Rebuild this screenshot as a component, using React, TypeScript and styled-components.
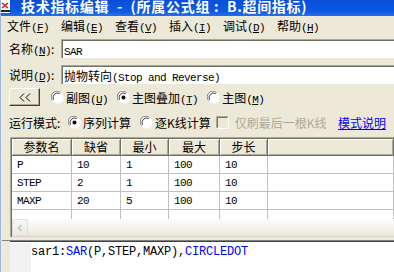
import React from 'react';
import styled, { createGlobalStyle } from 'styled-components';

const GlobalStyle = createGlobalStyle`
  html, body {
    margin: 0;
    padding: 0;
    background: #ece9d8;
  }
  body {
    font-family: "Noto Sans CJK SC", "DejaVu Sans", sans-serif;
    font-size: 12px;
    color: #000;
  }
`;

const Window = styled.div`
  width: 394px;
  height: 272px;
  overflow: hidden;
  background: #ece9d8;
  display: flex;
  flex-direction: column;
  border-left: 1px solid #9cb6e0;
  box-sizing: border-box;
`;

const TitleBar = styled.div`
  height: 16px;
  flex: none;
  background: linear-gradient(#0a4ed6, #0b5ae4 70%, #2a6ee6);
  display: flex;
  align-items: center;
  overflow: hidden;
`;

const TitleIcon = styled.svg`
  flex: none;
  margin-top: -4px;
`;

const TitleText = styled.div`
  color: #fff;
  font-weight: bold;
  font-size: 14px;
  line-height: 16px;
  margin-top: -5px;
  margin-left: 11px;
  white-space: pre;
  letter-spacing: 0.7px;
`;

const MenuBar = styled.div`
  height: 21px;
  flex: none;
  display: flex;
  align-items: center;
  padding-left: 6px;
`;

const MenuItem = styled.div`
  width: 54px;
  flex: none;
  white-space: nowrap;
  line-height: 20px;
`;

const Key = styled.span`
  font-family: "Liberation Mono", monospace;
  font-size: 11px;
  letter-spacing: -0.6px;
  text-decoration: underline;
`;

const Paren = styled.span`
  font-family: "Liberation Mono", monospace;
  font-size: 11px;
  letter-spacing: -0.6px;
`;

const Form = styled.div`
  padding-left: 8px;
  display: flex;
  flex-direction: column;
`;

const FieldRow = styled.div<{ $top: number }>`
  display: flex;
  align-items: center;
  height: 19px;
  margin-top: ${(p) => p.$top}px;
`;

const Label = styled.div<{ $w?: number }>`
  width: ${(p) => p.$w ?? 52}px;
  flex: none;
  white-space: nowrap;
`;

const Field = styled.div`
  flex: 1;
  height: 19px;
  box-sizing: border-box;
  background: #fff;
  border-top: 1px solid #aca899;
  border-left: 1px solid #aca899;
  box-shadow: inset 1px 1px #716f64;
  padding: 1px 0 0 2px;
  line-height: 17px;
  white-space: nowrap;
  overflow: hidden;
`;

const Mono = styled.span`
  font-family: "Liberation Mono", monospace;
  font-size: 11px;
  letter-spacing: -0.6px;
`;

const OptionRow = styled.div<{ $top: number }>`
  display: flex;
  align-items: center;
  height: 18px;
  margin-top: ${(p) => p.$top}px;
  white-space: nowrap;
`;

const Button = styled.div`
  width: 31px;
  height: 18px;
  box-sizing: border-box;
  flex: none;
  background: #ece9d8;
  border-top: 1px solid #fff;
  border-left: 1px solid #fff;
  border-right: 1px solid #404040;
  border-bottom: 1px solid #404040;
  box-shadow: inset -1px -1px #aca899;
  display: flex;
  align-items: center;
  justify-content: center;
`;

const Option = styled.div<{ $ml: number; $disabled?: boolean }>`
  display: flex;
  align-items: center;
  flex: none;
  margin-left: ${(p) => p.$ml}px;
  color: ${(p) => (p.$disabled ? '#aca899' : '#000')};
  gap: 2px;
`;

const CheckText = styled.span`
  margin-left: 4px;
`;

const Link = styled.div`
  margin-left: auto;
  margin-right: 8px;
  color: #0000ff;
  text-decoration: underline;
`;

const Radio = ({ checked }: { checked?: boolean }) => (
  <svg width="13" height="13" viewBox="0 0 13 13">
    <circle cx="6.5" cy="6.5" r="6" fill="#fff" />
    <path d="M1.6 9.5 A5.6 5.6 0 0 1 9.5 1.6" stroke="#808080" strokeWidth="1" fill="none" />
    <path d="M2.6 8.7 A4.5 4.5 0 0 1 8.7 2.6" stroke="#404040" strokeWidth="1" fill="none" />
    <path d="M3.5 11.4 A5.6 5.6 0 0 0 11.4 3.5" stroke="#f4f3ee" strokeWidth="1" fill="none" />
    {checked && <circle cx="6.5" cy="6.5" r="2" fill="#000" />}
  </svg>
);

const Check = () => (
  <svg width="13" height="13" viewBox="0 0 13 13">
    <rect x="0" y="0" width="13" height="13" fill="#ece9d8" />
    <path d="M0.5 12.5 V0.5 H12.5" stroke="#aca899" fill="none" />
    <path d="M1.5 11.5 V1.5 H11.5" stroke="#716f64" fill="none" />
    <path d="M12.5 0.5 V12.5 H0.5" stroke="#fff" fill="none" />
  </svg>
);

const TableFrame = styled.div`
  margin-top: 6px;
  margin-left: 1px;
  height: 100px;
  box-sizing: border-box;
  border-top: 1px solid #aca899;
  border-left: 1px solid #aca899;
  box-shadow: inset 1px 1px #716f64;
  padding: 1px 0 0 1px;
  background: #fff;
  display: flex;
  flex-direction: column;
  overflow: hidden;
`;

const Grid = styled.div`
  flex: 1;
  display: grid;
  grid-template-columns: 60px 49px 48px 51px 48px 1fr;
  grid-auto-rows: 18px;
  grid-template-rows: 17px;
  overflow: hidden;
`;

const HeadCell = styled.div`
  background: #ece9d8;
  box-sizing: border-box;
  border-right: 1px solid #716f64;
  border-bottom: 1px solid #716f64;
  box-shadow: inset 1px 1px #fff, inset -1px -1px #aca899;
  text-align: center;
  line-height: 16px;
  white-space: nowrap;
`;

const Cell = styled.div`
  box-sizing: border-box;
  border-right: 1px solid #c0c0c0;
  border-bottom: 1px solid #c0c0c0;
  padding-left: 5px;
  line-height: 18px;
  font-family: "Liberation Mono", monospace;
  font-size: 11px;
  letter-spacing: -0.6px;
`;

const ScrollBar = styled.div`
  height: 17px;
  flex: none;
  display: flex;
  background: linear-gradient(#fdfdfb, #f3f1ea 60%, #e8e6dc);
  border-bottom: 1px solid #d8d5c8;
`;

const ScrollButton = styled.div`
  width: 16px;
  height: 17px;
  box-sizing: border-box;
  border: 1px solid #e2e0d6;
  border-radius: 2px;
  background: linear-gradient(#f8f7f3, #ebe9e0);
  display: flex;
  align-items: center;
  justify-content: center;
`;

const Editor = styled.div`
  margin-top: 3px;
  flex: 1;
  display: flex;
  border-top: 1px solid #808080;
  box-shadow: inset 0 1px #404040;
  background: #fff;
  margin-left: 1px;
`;

const EditorEdge = styled.div`
  width: 8px;
  flex: none;
  background: #ece9d8;
`;

const Gutter = styled.div`
  width: 21px;
  flex: none;
  background: #f2f2f2;
  margin-top: 2px;
`;

const Code = styled.div`
  padding-top: 4px;
  font-family: "Liberation Mono", monospace;
  font-size: 12px;
  letter-spacing: -0.2px;
  white-space: nowrap;
`;

const Fn = styled.span`
  color: #0000ff;
`;

const params = [
  ['P', '10', '1', '100', '10'],
  ['STEP', '2', '1', '100', '10'],
  ['MAXP', '20', '5', '100', '10'],
  ['', '', '', '', ''],
];

const headers = ['参数名', '缺省', '最小', '最大', '步长', ''];

const menus: [string, string][] = [
  ['文件', 'F'],
  ['编辑', 'E'],
  ['查看', 'V'],
  ['插入', 'I'],
  ['调试', 'D'],
  ['帮助', 'H'],
];

const Hot = ({ k }: { k: string }) => (
  <>
    <Paren>(</Paren>
    <Key>{k}</Key>
    <Paren>)</Paren>
  </>
);

export default function App() {
  return (
    <>
      <GlobalStyle />
      <Window>
        <TitleBar>
          <TitleIcon width="9" height="14" viewBox="0 0 9 14">
            <rect x="0" y="0" width="9" height="14" fill="#fff" />
            <path d="M1 4 L7 9 M7 4 L1 9" stroke="#d02020" strokeWidth="1.6" />
            <rect x="0" y="11" width="9" height="2" fill="#222" />
          </TitleIcon>
          <TitleText>{'技术指标编辑  -  (所属公式组 :  B.超间指标)'}</TitleText>
        </TitleBar>
        <MenuBar>
          {menus.map(([name, k]) => (
            <MenuItem key={k}>
              {name}
              <Hot k={k} />
            </MenuItem>
          ))}
        </MenuBar>
        <Form>
          <FieldRow $top={2}>
            <Label>
              名称<Hot k="N" />:
            </Label>
            <Field>
              <Mono>SAR</Mono>
            </Field>
          </FieldRow>
          <FieldRow $top={7}>
            <Label>
              说明<Hot k="D" />:
            </Label>
            <Field>
              抛物转向<Mono>(Stop and Reverse)</Mono>
            </Field>
          </FieldRow>
          <OptionRow $top={4}>
            <Button>
              <svg width="12" height="9" viewBox="0 0 12 9">
                <path d="M5 0.5 L1 4.5 L5 8.5 M11 0.5 L7 4.5 L11 8.5" stroke="#000" strokeWidth="1" fill="none" />
              </svg>
            </Button>
            <Option $ml={11}>
              <Radio />
              <span>
                副图<Hot k="U" />
              </span>
            </Option>
            <Option $ml={9}>
              <Radio checked />
              <span>
                主图叠加<Hot k="T" />
              </span>
            </Option>
            <Option $ml={9}>
              <Radio />
              <span>
                主图<Hot k="M" />
              </span>
            </Option>
          </OptionRow>
          <OptionRow $top={7}>
            <Label $w={59}>运行模式:</Label>
            <Option $ml={0}>
              <Radio checked />
              <span>序列计算</span>
            </Option>
            <Option $ml={9}>
              <Radio />
              <span>逐K线计算</span>
            </Option>
            <Option $ml={5} $disabled>
              <Check />
              <CheckText>仅刷最后一根K线</CheckText>
            </Option>
            <Link>模式说明</Link>
          </OptionRow>
          <TableFrame>
            <Grid>
              {headers.map((h, i) => (
                <HeadCell key={i}>{h}</HeadCell>
              ))}
              {params.map((row, r) =>
                [...row, ''].map((v, c) => <Cell key={`${r}-${c}`}>{v}</Cell>)
              )}
            </Grid>
            <ScrollBar>
              <ScrollButton>
                <svg width="6" height="8" viewBox="0 0 6 8">
                  <path d="M4.5 1 L1.5 4 L4.5 7" stroke="#b8c2d6" strokeWidth="1.6" fill="none" />
                </svg>
              </ScrollButton>
            </ScrollBar>
          </TableFrame>
        </Form>
        <Editor>
          <EditorEdge />
          <Gutter />
          <Code>
            sar1:<Fn>SAR</Fn>(P,STEP,MAXP),<Fn>CIRCLEDOT</Fn>
          </Code>
        </Editor>
      </Window>
    </>
  );
}
